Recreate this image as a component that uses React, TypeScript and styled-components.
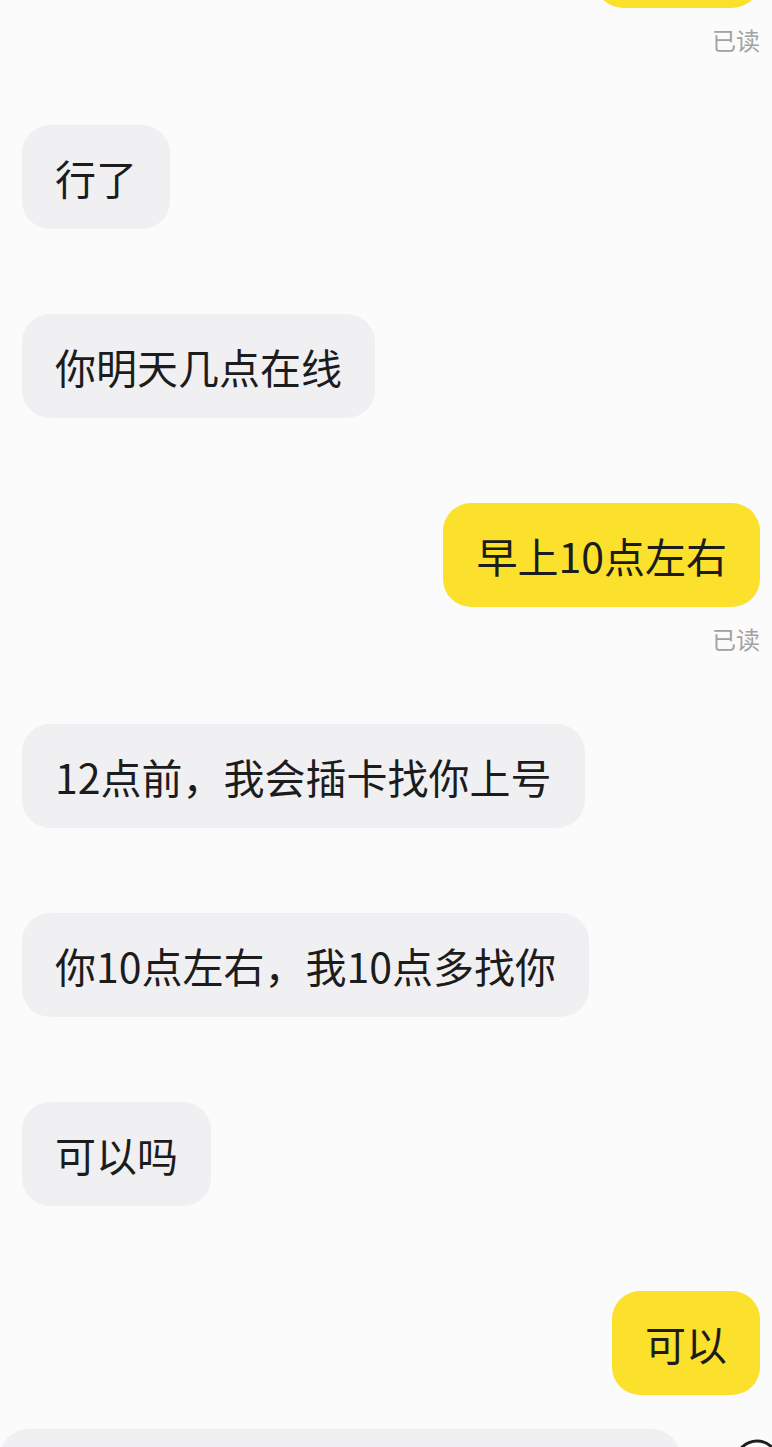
import React from 'react';
import styled, { createGlobalStyle } from 'styled-components';

const GlobalStyle = createGlobalStyle`
  html, body {
    margin: 0;
    padding: 0;
    height: 100%;
    overflow: hidden;
    background: #fbfbfb;
  }
  body {
    font-family: "Noto Sans CJK SC", "Noto Sans", sans-serif;
    color: #1c1c1c;
  }
`;

const Screen = styled.div`
  display: flex;
  flex-direction: column;
  height: 1447px;
  overflow: hidden;
`;

const Thread = styled.div`
  display: flex;
  flex-direction: column;
  gap: 85px;
  padding: 0 12px 0 22px;
`;

const Message = styled.div<{ $mine?: boolean }>`
  display: flex;
  flex-direction: column;
  align-items: ${(p) => (p.$mine ? 'flex-end' : 'flex-start')};
`;

const Bubble = styled.div<{ $mine?: boolean }>`
  box-sizing: border-box;
  height: 104px;
  padding: 24px 33px;
  border-radius: 28px;
  font-size: 41px;
  line-height: 56px;
  white-space: nowrap;
  background: ${(p) => (p.$mine ? '#fbe02c' : '#f0f0f2')};
`;

// the previous message, scrolled mostly out of view above the top edge
const CutBubble = styled(Bubble)`
  width: 165px;
  margin-top: -96px;
`;

const ReadMark = styled.div`
  margin-top: 19px;
  margin-bottom: -12px;
  font-size: 24px;
  line-height: 25px;
  color: #a2a2a2;
`;

const InputBar = styled.div`
  display: flex;
  align-items: flex-start;
  gap: 53px;
  margin-top: 34px;
`;

const InputField = styled.div`
  width: 680px;
  height: 104px;
  flex-shrink: 0;
  border-radius: 28px;
  background: #f0f0f2;
`;

const IconButton = styled.div`
  margin-top: 9px;
  width: 48px;
  height: 48px;
  flex-shrink: 0;
`;

type Msg = { text: string; mine?: boolean; read?: boolean };

const messages: Msg[] = [
  { text: '行了' },
  { text: '你明天几点在线' },
  { text: '早上10点左右', mine: true, read: true },
  { text: '12点前，我会插卡找你上号' },
  { text: '你10点左右，我10点多找你' },
  { text: '可以吗' },
  { text: '可以', mine: true },
];

const App = () => {
  return (
    <Screen>
      <GlobalStyle />
      <Thread>
        <Message $mine>
          <CutBubble $mine />
          <ReadMark>已读</ReadMark>
        </Message>
        {messages.map((m, i) => (
          <Message key={i} $mine={m.mine}>
            <Bubble $mine={m.mine}>{m.text}</Bubble>
            {m.read ? <ReadMark>已读</ReadMark> : null}
          </Message>
        ))}
      </Thread>
      <InputBar>
        <InputField />
        <IconButton>
          <svg width="48" height="48" viewBox="0 0 48 48">
            <circle cx="24" cy="24" r="21" fill="none" stroke="#1e1e1e" strokeWidth="3" />
          </svg>
        </IconButton>
      </InputBar>
    </Screen>
  );
};

export default App;
